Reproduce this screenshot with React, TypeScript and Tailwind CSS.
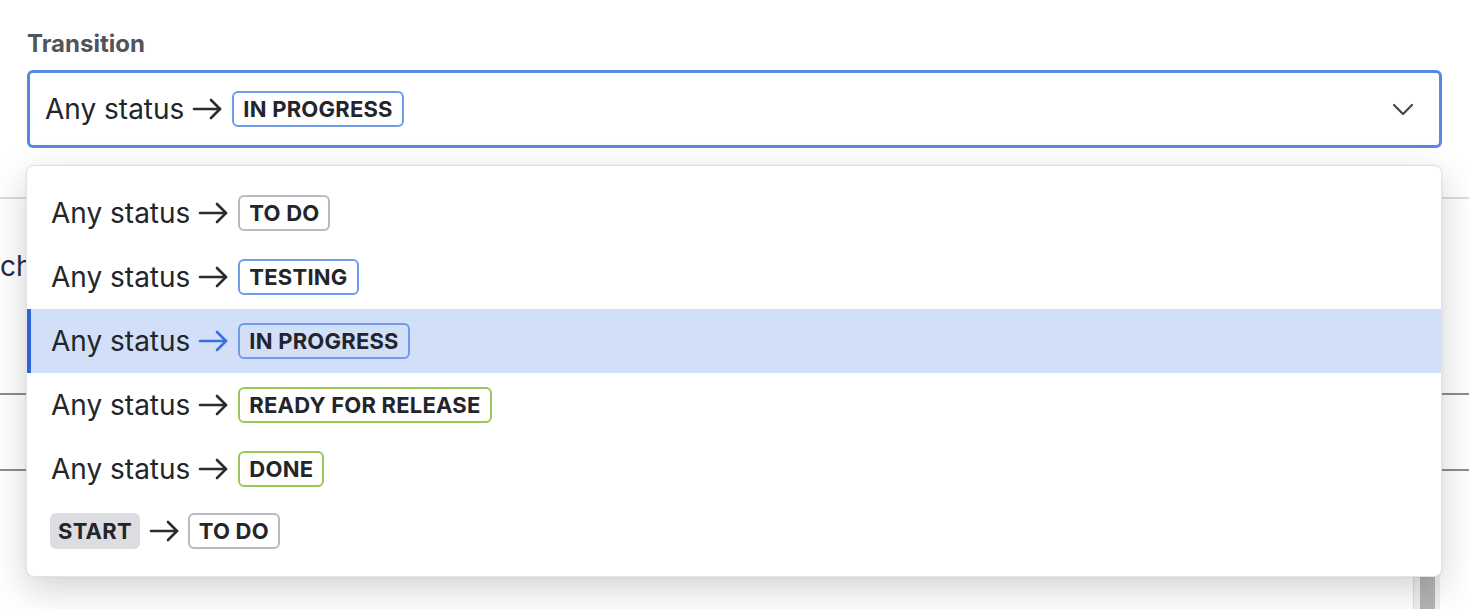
type Tone = "gray" | "blue" | "green" | "start";

const chipTone: Record<Tone, string> = {
  gray: "border-2 border-[#b9babf] px-[9px]",
  blue: "border-2 border-[#6f9be8] px-[9px]",
  green: "border-2 border-[#9cc65a] px-[9px]",
  start: "bg-[#dcdde1] border-2 border-transparent px-[6px]",
};

function Chip({ label, tone }: { label: string; tone: Tone }) {
  return (
    <span
      className={`inline-flex h-[36px] items-center rounded-[6px] text-[22px] font-bold leading-none tracking-[0.01em] text-[#23252b] ${chipTone[tone]}`}
    >
      {label}
    </span>
  );
}

function Arrow({ active = false }: { active?: boolean }) {
  return (
    <svg
      width="31"
      height="22"
      viewBox="0 0 31 22"
      fill="none"
      stroke={active ? "#3b6fd9" : "#2a2c31"}
      strokeWidth="2.6"
      strokeLinecap="round"
      strokeLinejoin="round"
      className="mx-[8px] shrink-0"
    >
      <path d="M2 11h26" />
      <path d="M19 2l9 9-9 9" />
    </svg>
  );
}

const options: { tone: Tone; label: string }[] = [
  { tone: "gray", label: "TO DO" },
  { tone: "blue", label: "TESTING" },
  { tone: "blue", label: "IN PROGRESS" },
  { tone: "green", label: "READY FOR RELEASE" },
  { tone: "green", label: "DONE" },
];

export default function App() {
  const selected = 2;

  return (
    <div className="relative h-[609px] w-[1469px] overflow-hidden bg-white font-['Inter',sans-serif] text-[#23252b]">
      <div className="px-[27px] pt-[29px]">
        <div className="text-[24px] font-bold leading-[29px] text-[#51545b]">
          Transition
        </div>
        <div className="mt-[12px] flex h-[78px] w-[1415px] items-center rounded-[6px] border-[3px] border-[#5889e2] pl-[15px] pr-[25px]">
          <span className="text-[28px] leading-none">Any status</span>
          <Arrow />
          <span className="ml-[1px]">
            <Chip label="IN PROGRESS" tone="blue" />
          </span>
          <svg
            width="22"
            height="13"
            viewBox="0 0 22 13"
            fill="none"
            stroke="#44474f"
            strokeWidth="2.2"
            strokeLinecap="round"
            strokeLinejoin="round"
            className="ml-auto"
          >
            <path d="M2 2l9 9 9-9" />
          </svg>
        </div>
      </div>

      {/* page behind the menu */}
      <div className="mt-[49px] border-t-2 border-[#dcdcde]">
        <div className="pt-[53px] text-[28px] leading-none text-[#1e2b4a]">ch</div>
        <div className="mt-[113px] border-t-2 border-[#878d9b]" />
        <div className="mt-[74px] border-t-2 border-[#878d9b]" />
        <div className="ml-[1413px] mt-[99px] flex h-[40px] w-[27px] border-l border-[#dedede] bg-[#efefef] pl-[6px]">
          <div className="h-full w-[15px] bg-[#b4b4b4]" />
        </div>
      </div>

      {/* open menu */}
      <div className="absolute left-[26px] top-[165px] w-[1416px] rounded-[8px] border border-[#e3e3e6] bg-white py-[15px] shadow-[0_12px_36px_rgba(0,0,0,0.18),0_0_3px_rgba(0,0,0,0.06)]">
        {options.map((o, i) => {
          const active = i === selected;
          return (
            <div
              key={o.label}
              className={`flex h-16 items-center ${
                active
                  ? "border-l-4 border-[#2e64d7] bg-[#d1e0f8] pl-[20px]"
                  : "pl-[24px]"
              }`}
            >
              <span className="text-[28px] leading-none">Any status</span>
              <Arrow active={active} />
              <span className="ml-[1px]">
                <Chip label={o.label} tone={o.tone} />
              </span>
            </div>
          );
        })}
        <div className="flex h-[60px] items-center pl-[23px]">
          <Chip label="START" tone="start" />
          <span className="ml-[1px]">
            <Arrow />
          </span>
          <Chip label="TO DO" tone="gray" />
        </div>
      </div>
    </div>
  );
}
